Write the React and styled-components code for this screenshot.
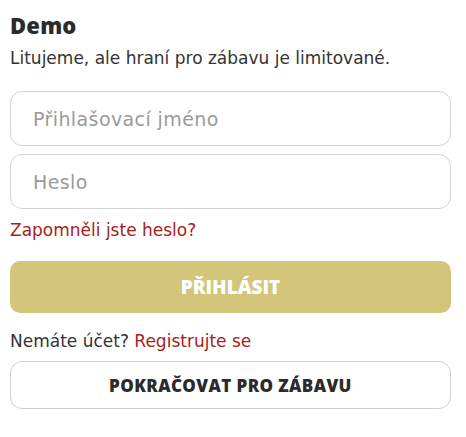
import React from 'react';
import styled, { createGlobalStyle } from 'styled-components';

const GlobalStyle = createGlobalStyle`
  html, body {
    margin: 0;
    padding: 0;
    background: #fff;
  }
  body {
    font-family: "DejaVu Sans", "Open Sans", sans-serif;
    color: #333;
  }
`;

const Wrapper = styled.div`
  display: flex;
  flex-direction: column;
  padding: 12px 15px 0 10px;
  width: 466px;
  box-sizing: border-box;
`;

const Title = styled.h2`
  margin: 0;
  font-family: "Open Sans", sans-serif;
  font-size: 22px;
  font-weight: 800;
  letter-spacing: 0.2px;
  color: #2b2b2b;
  line-height: 26px;
`;

const Subtitle = styled.p`
  margin: 8px 0 0;
  font-size: 17px;
  line-height: 24px;
  color: #333;
`;

const Form = styled.form`
  display: flex;
  flex-direction: column;
  margin-top: 21px;
`;

const Input = styled.input`
  box-sizing: border-box;
  height: 55px;
  width: 100%;
  border: 1px solid #d4d4d4;
  border-radius: 12px;
  padding: 0 22px;
  font-family: inherit;
  font-size: 19px;
  letter-spacing: 0.4px;
  color: #333;
  outline: none;
  margin-bottom: ${(p) => (p.$last ? '0' : '8px')};

  &::placeholder {
    color: #9a9a9a;
  }
`;

const Link = styled.a`
  color: #a8201a;
  text-decoration: none;
  cursor: pointer;
`;

const Forgot = styled(Link)`
  display: block;
  margin-top: 9px;
  font-size: 17px;
  line-height: 24px;
`;

const Button = styled.button`
  box-sizing: border-box;
  width: 100%;
  font-family: "Open Sans", sans-serif;
  font-weight: 800;
  text-transform: uppercase;
  cursor: pointer;
  border-radius: ${(p) => (p.$primary ? '10px' : '12px')};
  height: ${(p) => (p.$primary ? '52px' : '48px')};
  font-size: ${(p) => (p.$primary ? '19px' : '17px')};
  letter-spacing: ${(p) => (p.$primary ? '0' : '0.4px')};
  background: ${(p) => (p.$primary ? '#d3c67a' : '#fff')};
  color: ${(p) => (p.$primary ? '#fff' : '#2b2b2b')};
  border: ${(p) => (p.$primary ? 'none' : '1px solid #d0d0d0')};
`;

const LoginButton = styled(Button)`
  margin-top: 19px;
`;

const Register = styled.p`
  margin: 16px 0 0;
  font-size: 17px;
  line-height: 24px;
  color: #333;
`;

const ContinueButton = styled(Button)`
  margin-top: 8px;
`;

export default function App() {
  return (
    <>
      <GlobalStyle />
      <Wrapper>
        <Title>Demo</Title>
        <Subtitle>Litujeme, ale hraní pro zábavu je limitované.</Subtitle>
        <Form onSubmit={(e) => e.preventDefault()}>
          <Input type="text" placeholder="Přihlašovací jméno" />
          <Input type="password" placeholder="Heslo" $last />
          <Forgot>Zapomněli jste heslo?</Forgot>
          <LoginButton type="submit" $primary>Přihlásit</LoginButton>
        </Form>
        <Register>
          Nemáte účet? <Link>Registrujte se</Link>
        </Register>
        <ContinueButton type="button">Pokračovat pro zábavu</ContinueButton>
      </Wrapper>
    </>
  );
}
